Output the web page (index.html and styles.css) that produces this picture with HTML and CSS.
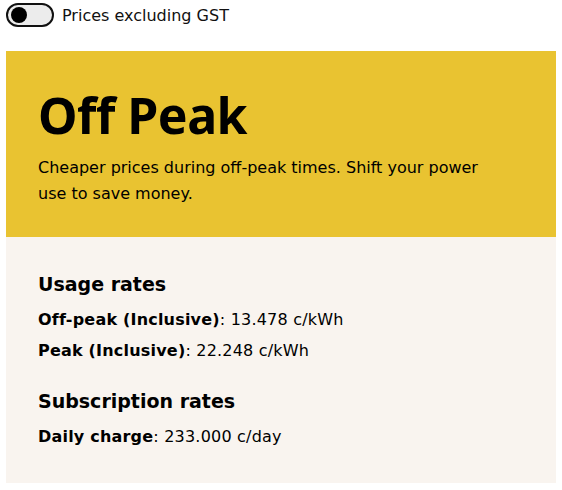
FILE: index.html
```html
<!DOCTYPE html>
<html lang="en">
<head>
<meta charset="utf-8">
<link rel="stylesheet" href="styles.css">
</head>
<body>
<div class="page">
  <label class="gst-toggle">
    <span class="switch"><span class="knob"></span></span>
    <span class="gst-label">Prices excluding GST</span>
  </label>
  <section class="plan">
    <header class="plan-head">
      <h1 class="plan-title">Off Peak</h1>
      <p class="plan-desc">Cheaper prices during off-peak times. Shift your power use to save money.</p>
    </header>
    <div class="plan-body">
      <h2 class="rate-heading">Usage rates</h2>
      <p class="rate"><strong>Off-peak (Inclusive)</strong>: 13.478 c/kWh</p>
      <p class="rate"><strong>Peak (Inclusive)</strong>: 22.248 c/kWh</p>
      <h2 class="rate-heading rate-heading-2">Subscription rates</h2>
      <p class="rate"><strong>Daily charge</strong>: 233.000 c/day</p>
    </div>
  </section>
</div>
</body>
</html>
```
FILE: styles.css
```css
* { box-sizing: border-box; }
html, body { margin: 0; padding: 0; background: #fff; }
body {
  font-family: "DejaVu Sans", "Noto Sans", sans-serif;
  color: #000;
}
.page { padding: 3px 6px 0 6px; }
.gst-toggle {
  display: flex;
  align-items: center;
  gap: 8px;
  height: 24px;
}
.switch {
  width: 48px;
  height: 24px;
  border: 2px solid #111;
  border-radius: 12px;
  background: #ececec;
  display: flex;
  align-items: center;
  padding-left: 3px;
}
.knob {
  width: 16px;
  height: 16px;
  border-radius: 50%;
  background: #000;
}
.gst-label { font-size: 16px; color: #111; }
.plan { margin-top: 24px; }
.plan-head {
  background: #e9c331;
  padding: 34px 32px 30px 32px;
  height: 186px;
}
.plan-title {
  margin: 0;
  font-family: "Noto Sans", sans-serif;
  font-size: 50px;
  font-weight: 700;
  line-height: 60px;
  letter-spacing: -0.5px;
}
.plan-desc {
  margin: 10px 0 0 0;
  max-width: 462px;
  font-size: 16px;
  line-height: 26px;
}
.plan-body {
  background: #f9f4ef;
  padding: 34px 32px 30px 32px;
  height: 246px;
}
.rate-heading {
  margin: 0 0 7px 0;
  font-size: 19px;
  line-height: 26px;
  font-weight: 700;
}
.rate-heading-2 { margin-top: 22px; }
.rate {
  margin: 0;
  font-size: 16px;
  line-height: 31px;
  letter-spacing: 0.2px;
}
.rate strong { font-weight: 700; }
```
